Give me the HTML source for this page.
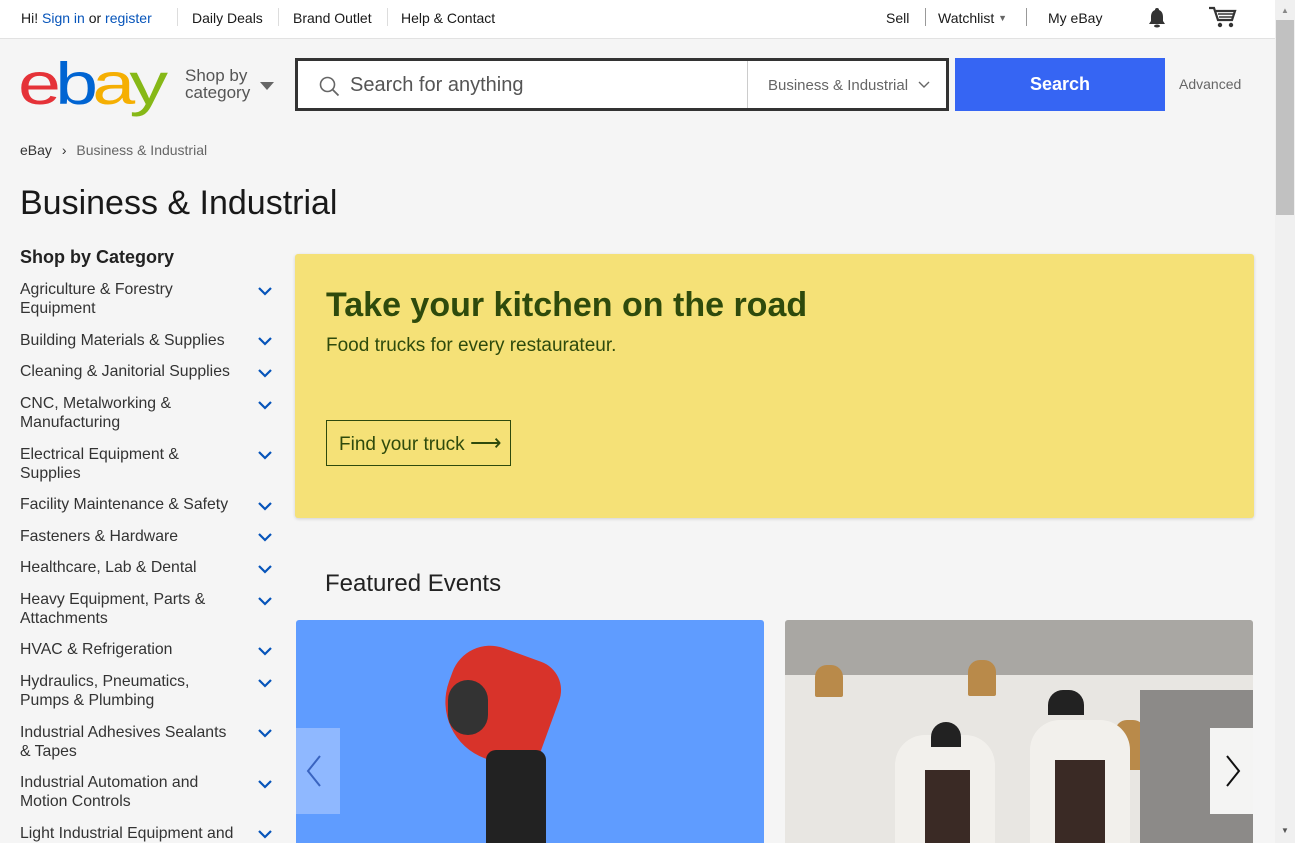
<!DOCTYPE html>
<html><head><meta charset="utf-8"><style>
*{margin:0;padding:0;box-sizing:border-box}
body{width:1295px;height:843px;overflow:hidden;background:#f5f5f5;font-family:"Liberation Sans",Arial,sans-serif;color:#191919;position:relative}
.abs{position:absolute}
.top{left:0;top:0;width:1275px;height:39px;background:#fff;border-bottom:1px solid #e2e2e2;font-size:14px}
.top span{position:absolute;top:10px;white-space:nowrap}
.sep{position:absolute;width:1px;background:#ddd;top:8px;height:18px}
a{color:#0654ba;text-decoration:none}
.cat{position:absolute;left:20px;width:214px;font-size:15.8px;line-height:19px;color:#333}
.chev{position:absolute;left:257px;width:16px;height:10px}
.sb{left:1275px;top:0;width:20px;height:843px;background:#f0f0f0}
</style></head><body>
<div class="abs top">
<span style="left:21px">Hi! <a href="#">Sign in</a> or <a href="#">register</a></span>
<div class="sep" style="left:177px"></div>
<span style="left:192px">Daily Deals</span>
<div class="sep" style="left:278px"></div>
<span style="left:293px">Brand Outlet</span>
<div class="sep" style="left:387px"></div>
<span style="left:401px">Help &amp; Contact</span>
<span style="left:886px">Sell</span>
<div class="sep" style="left:925px;background:#999"></div>
<span style="left:938px">Watchlist <span style="position:relative;top:-2px;font-size:9px;color:#666">▼</span></span>
<div class="sep" style="left:1026px;background:#999"></div>
<span style="left:1048px">My eBay</span>
<svg class="abs" style="left:1147px;top:7px" width="20" height="21" viewBox="0 0 20 21"><path d="M10 1a2 2 0 0 1 2 2c3 1 4 4 4 7v4l2 3H2l2-3v-4c0-3 1-6 4-7a2 2 0 0 1 2-2z" fill="#333"/><ellipse cx="10" cy="19" rx="3" ry="1.5" fill="#333"/></svg>
<svg class="abs" style="left:1208px;top:6px" width="30" height="23" viewBox="0 0 30 23"><path d="M1 2h5l4 12h14l3-9H8" fill="none" stroke="#333" stroke-width="2.2"/><path d="M10 8h16M11 11h14" stroke="#333" stroke-width="1.5"/><circle cx="12" cy="19" r="2.2" fill="#333"/><circle cx="23" cy="19" r="2.2" fill="#333"/></svg>
</div>
<div class="abs" style="left:18px;top:51px;font-size:66px;letter-spacing:-5px;line-height:70px;transform:scale(1.17,0.9);transform-origin:0 10px">
<span style="color:#e53238">e</span><span style="color:#0064d2">b</span><span style="color:#f5af02">a</span><span style="color:#86b817">y</span></div>
<div class="abs" style="left:185px;top:67px;font-size:17px;line-height:17px;color:#555">Shop by<br>category</div>
<div class="abs" style="left:260px;top:82px;width:0;height:0;border-left:7px solid transparent;border-right:7px solid transparent;border-top:8px solid #666"></div>
<div class="abs" style="left:295px;top:58px;width:654px;height:53px;border:3px solid #333;background:#fff">
<svg class="abs" style="left:21px;top:15px" width="22" height="22" viewBox="0 0 22 22"><circle cx="8.5" cy="8.5" r="7" fill="none" stroke="#666" stroke-width="1.6"/><path d="M13.5 13.5l6 6" stroke="#666" stroke-width="1.8"/></svg>
<div class="abs" style="left:52px;top:13px;font-size:20px;color:#555">Search for anything</div>
<div class="abs" style="left:449px;top:0;width:1px;height:47px;background:#ccc"></div>
<div class="abs" style="left:470px;top:16px;font-size:15px;color:#666">Business &amp; Industrial</div>
<svg class="abs" style="left:620px;top:20px" width="12" height="8" viewBox="0 0 12 8"><path d="M1 1l5 5 5-5" fill="none" stroke="#666" stroke-width="1.4"/></svg>
</div>
<div class="abs" style="left:955px;top:58px;width:210px;height:53px;background:#3665f3;color:#fff;font-size:18px;font-weight:bold;text-align:center;line-height:53px">Search</div>
<div class="abs" style="left:1179px;top:76px;font-size:14px;color:#666">Advanced</div>
<div class="abs" style="left:20px;top:142px;font-size:14px;color:#333">eBay <span style="margin:0 6px">›</span> <span style="color:#666">Business &amp; Industrial</span></div>
<div class="abs" style="left:20px;top:184px;font-size:34px;color:#191919">Business &amp; Industrial</div>
<div class="abs" style="left:20px;top:247px;font-size:18px;font-weight:bold;color:#222">Shop by Category</div>
<div class="cat" style="top:280px">Agriculture &amp; Forestry Equipment</div>
<div class="cat" style="top:331px">Building Materials &amp; Supplies</div>
<div class="cat" style="top:362px">Cleaning &amp; Janitorial Supplies</div>
<div class="cat" style="top:394px">CNC, Metalworking &amp; Manufacturing</div>
<div class="cat" style="top:445px">Electrical Equipment &amp; Supplies</div>
<div class="cat" style="top:495px">Facility Maintenance &amp; Safety</div>
<div class="cat" style="top:527px">Fasteners &amp; Hardware</div>
<div class="cat" style="top:558px">Healthcare, Lab &amp; Dental</div>
<div class="cat" style="top:590px">Heavy Equipment, Parts &amp; Attachments</div>
<div class="cat" style="top:640px">HVAC &amp; Refrigeration</div>
<div class="cat" style="top:672px">Hydraulics, Pneumatics,<br>Pumps &amp; Plumbing</div>
<div class="cat" style="top:723px">Industrial Adhesives Sealants<br>&amp; Tapes</div>
<div class="cat" style="top:773px">Industrial Automation and Motion Controls</div>
<div class="cat" style="top:824px;width:240px">Light Industrial Equipment and</div>
<svg width="0" height="0"><defs><path id="c" d="M2 2l6 6 6-6" fill="none" stroke="#0654ba" stroke-width="2.2"/></defs></svg>
<svg class="chev" style="top:286px"><use href="#c"/></svg>
<svg class="chev" style="top:336px"><use href="#c"/></svg>
<svg class="chev" style="top:368px"><use href="#c"/></svg>
<svg class="chev" style="top:400px"><use href="#c"/></svg>
<svg class="chev" style="top:450px"><use href="#c"/></svg>
<svg class="chev" style="top:501px"><use href="#c"/></svg>
<svg class="chev" style="top:532px"><use href="#c"/></svg>
<svg class="chev" style="top:564px"><use href="#c"/></svg>
<svg class="chev" style="top:596px"><use href="#c"/></svg>
<svg class="chev" style="top:646px"><use href="#c"/></svg>
<svg class="chev" style="top:678px"><use href="#c"/></svg>
<svg class="chev" style="top:728px"><use href="#c"/></svg>
<svg class="chev" style="top:779px"><use href="#c"/></svg>
<svg class="chev" style="top:829px"><use href="#c"/></svg>
<div class="abs" style="left:295px;top:254px;width:959px;height:264px;background:#f5e177;border-radius:3px;box-shadow:0 1px 3px rgba(0,0,0,.15)">
<div class="abs" style="left:31px;top:32px;font-size:34px;font-weight:bold;color:#2e4a0c">Take your kitchen on the road</div>
<div class="abs" style="left:31px;top:81px;font-size:19px;color:#2e4a0c">Food trucks for every restaurateur.</div>
<div class="abs" style="left:31px;top:166px;width:185px;height:46px;border:1px solid #2e4a0c;font-size:19px;color:#2e4a0c;line-height:44px;padding-left:12px">Find your truck <span style="font-size:22px">⟶</span></div>
</div>
<div class="abs" style="left:325px;top:570px;font-size:24px;color:#222">Featured Events</div>
<div class="abs" style="left:296px;top:620px;width:468px;height:223px;background:#5f9cff;border-radius:3px 3px 0 0;overflow:hidden">
<div class="abs" style="left:148px;top:30px;width:110px;height:110px;background:#d8332a;border-radius:40px 30px 20px 60px;transform:rotate(20deg)"></div>
<div class="abs" style="left:152px;top:60px;width:40px;height:55px;background:#333;border-radius:20px"></div>
<div class="abs" style="left:190px;top:130px;width:60px;height:110px;background:#222;border-radius:10px"></div>
<div class="abs" style="left:0;top:108px;width:44px;height:86px;background:#8fb8ff"></div>
<svg class="abs" style="left:8px;top:134px" width="20" height="34"><path d="M16 2L4 17l12 15" fill="none" stroke="#3a64c0" stroke-width="2"/></svg>
</div>
<div class="abs" style="left:785px;top:620px;width:468px;height:223px;background:#e8e6e2;border-radius:3px 3px 0 0;overflow:hidden">
<div class="abs" style="left:0;top:0;width:468px;height:55px;background:#a9a7a3"></div>
<div class="abs" style="left:30px;top:45px;width:28px;height:32px;background:#b98a4a;border-radius:12px 12px 2px 2px"></div>
<div class="abs" style="left:183px;top:40px;width:28px;height:36px;background:#b98a4a;border-radius:12px 12px 2px 2px"></div>
<div class="abs" style="left:330px;top:100px;width:30px;height:50px;background:#b98a4a;border-radius:12px 12px 2px 2px"></div>
<div class="abs" style="left:355px;top:70px;width:113px;height:153px;background:#8c8a88"></div>
<div class="abs" style="left:110px;top:115px;width:100px;height:110px;background:#f2f0ec;border-radius:30px 30px 0 0"></div>
<div class="abs" style="left:140px;top:150px;width:45px;height:75px;background:#3a2a25"></div>
<div class="abs" style="left:245px;top:100px;width:100px;height:125px;background:#f2f0ec;border-radius:30px 30px 0 0"></div>
<div class="abs" style="left:270px;top:140px;width:50px;height:85px;background:#3a2a25"></div>
<div class="abs" style="left:146px;top:102px;width:30px;height:25px;background:#222;border-radius:15px 15px 0 0"></div>
<div class="abs" style="left:263px;top:70px;width:36px;height:25px;background:#222;border-radius:15px 15px 0 0"></div>
<div class="abs" style="left:425px;top:108px;width:43px;height:86px;background:rgba(255,255,255,.9)"></div>
<svg class="abs" style="left:438px;top:134px" width="20" height="34"><path d="M4 2l12 15L4 32" fill="none" stroke="#111" stroke-width="2"/></svg>
</div>
<div class="abs sb"><div class="abs" style="left:1px;top:20px;width:18px;height:195px;background:#c1c1c1"></div>
<div class="abs" style="left:6px;top:6px;font-size:8px;color:#888">▲</div>
<div class="abs" style="left:6px;top:826px;font-size:8px;color:#555">▼</div></div>
</body></html>
